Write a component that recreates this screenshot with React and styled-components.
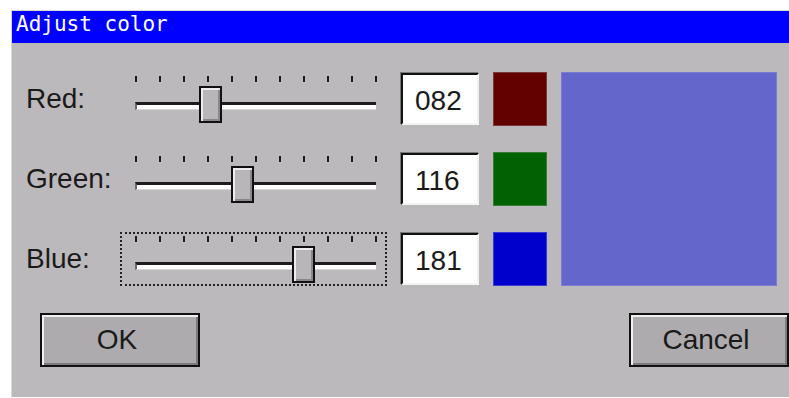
import React from "react";
import styled, { createGlobalStyle } from "styled-components";

const Global = createGlobalStyle`
  html, body { margin: 0; padding: 0; background: #ffffff; }
  * { box-sizing: border-box; }
`;

const Dialog = styled.div`
  margin: 10px 0 0 11px;
  width: 778px;
  height: 387px;
  background: #bcb9bc;
  border-top: 1px solid #d8d6d8;
  border-left: 1px solid #d8d6d8;
  display: flex;
  flex-direction: column;
  font-family: "Liberation Sans", Arial, sans-serif;
  color: #1a1a1a;
`;

const TitleBar = styled.div`
  height: 32px;
  background: #0000ff;
  color: #ffffff;
  font-family: "DejaVu Sans Mono", "Liberation Mono", monospace;
  font-size: 21px;
  line-height: 27px;
  padding-left: 4px;
  white-space: pre;
`;

const Content = styled.div`
  display: grid;
  grid-template-columns: 80px 267px 78px 54px 216px;
  grid-template-rows: 54px 54px 54px;
  column-gap: 14px;
  row-gap: 26px;
  padding: 29px 0 0 14px;
`;

const Label = styled.div`
  font-size: 28px;
  align-self: center;
  white-space: nowrap;
`;

const SliderBox = styled.div`
  position: relative;
  height: 54px;
  border: 2px dotted ${(p) => (p.$focused ? "#222" : "transparent")};
  display: flex;
  flex-direction: column;
`;

const Ticks = styled.div`
  display: flex;
  gap: 22px;
  margin: 2px 0 0 13px;
`;

const Tick = styled.span`
  width: 2px;
  height: 6px;
  background: #1c1c1c;
`;

const Track = styled.div`
  margin: 20px 0 0 13px;
  width: 241px;
  height: 8px;
  background: #ffffff;
  border-top: 3px solid #1c1c1c;
  border-left: 2px solid #6a686a;
  border-bottom: 1px solid #d8d6d8;
`;

const Thumb = styled.div`
  position: absolute;
  top: 12px;
  left: ${(p) => p.$left}px;
  width: 23px;
  height: 37px;
  border: 2px solid #111;
  background: #b8b6b8;
  box-shadow: inset 2px 2px 0 #ececec, inset -2px -2px 0 #8a888a;
`;

const ValueBox = styled.div`
  align-self: center;
  width: 78px;
  height: 52px;
  background: #ffffff;
  border-top: 2px solid #111;
  border-left: 2px solid #111;
  border-right: 2px solid #f2f2f2;
  border-bottom: 2px solid #f2f2f2;
  box-shadow: -1px -1px 0 #7a787a;
  font-size: 28px;
  display: flex;
  align-items: center;
  padding: 4px 0 0 12px;
`;

const Swatch = styled.div`
  width: 54px;
  height: 54px;
  background: ${(p) => p.$color};
  border: 1px solid ${(p) => p.$edge};
`;

const Preview = styled.div`
  grid-column: 5;
  grid-row: 1 / span 3;
  background: #6466cc;
  border: 1px solid #7a7cd4;
`;

const ButtonRow = styled.div`
  display: flex;
  justify-content: space-between;
  margin-top: 27px;
  padding: 0 0 0 28px;
`;

const Button = styled.div`
  width: 160px;
  height: 54px;
  border: 2px solid #111;
  background: #adabad;
  box-shadow: inset 2px 2px 0 #f0f0f0, inset -2px -2px 0 #7c7a7c;
  font-size: 28px;
  display: flex;
  align-items: center;
  justify-content: center;
  padding-right: 6px;
`;

const rows = [
  { label: "Red:", value: 82, text: "082", color: "#620000", edge: "#7a3a3a" },
  { label: "Green:", value: 116, text: "116", color: "#006200", edge: "#3a7a3a" },
  { label: "Blue:", value: 181, text: "181", color: "#0000cc", edge: "#3a3ad8", focused: true },
];

function Slider({ value, focused }) {
  const left = 13 + (value * 240) / 255 - 11.5 - 2;
  return (
    <SliderBox $focused={focused}>
      <Ticks>
        {Array.from({ length: 11 }).map((_, i) => (
          <Tick key={i} />
        ))}
      </Ticks>
      <Track />
      <Thumb $left={Math.round(left)} />
    </SliderBox>
  );
}

export default function App() {
  return (
    <>
      <Global />
      <Dialog>
        <TitleBar>Adjust color</TitleBar>
        <Content>
          {rows.map((r) => (
            <React.Fragment key={r.label}>
              <Label>{r.label}</Label>
              <Slider value={r.value} focused={r.focused} />
              <ValueBox>{r.text}</ValueBox>
              <Swatch $color={r.color} $edge={r.edge} />
            </React.Fragment>
          ))}
          <Preview />
        </Content>
        <ButtonRow>
          <Button>OK</Button>
          <Button>Cancel</Button>
        </ButtonRow>
      </Dialog>
    </>
  );
}
